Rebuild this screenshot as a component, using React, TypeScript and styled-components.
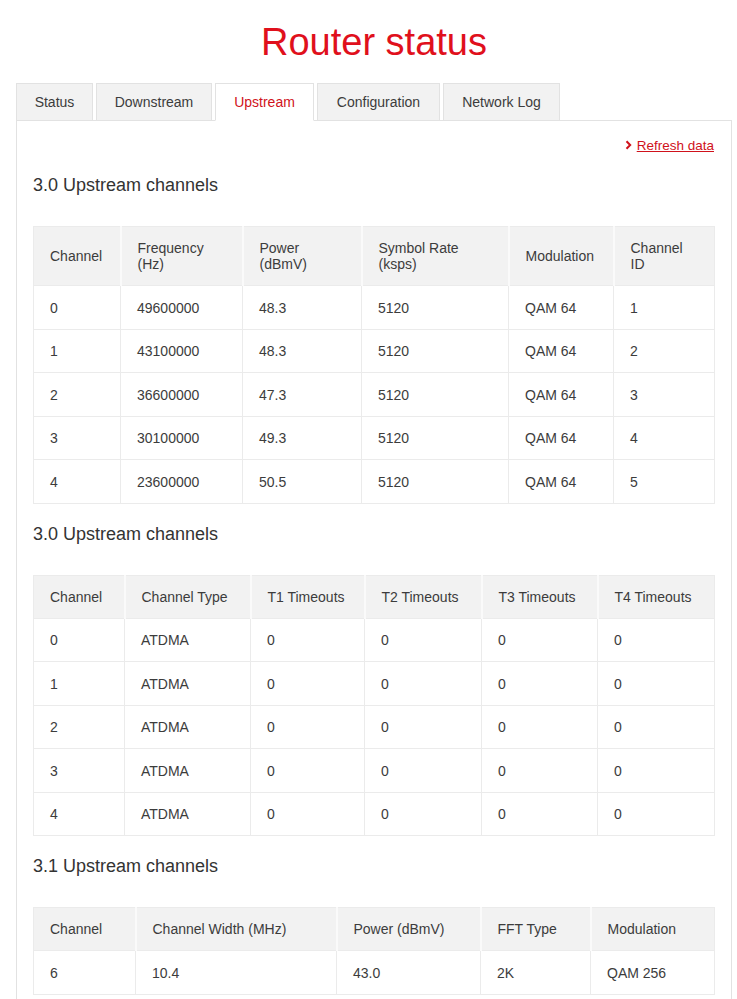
import React from "react";
import styled, { createGlobalStyle } from "styled-components";

const Global = createGlobalStyle`
  body {
    margin: 0;
    background: #fff;
    font-family: "Liberation Sans", Arial, sans-serif;
    color: #3c3c3c;
  }
`;

const Page = styled.div`
  padding: 0 5px 0 16px;
`;

const Title = styled.h1`
  margin: 0;
  padding-top: 19px;
  height: 83px;
  box-sizing: border-box;
  text-align: center;
  font-size: 38px;
  line-height: 46px;
  font-weight: 400;
  color: #e0101c;
`;

const Tabs = styled.div`
  display: flex;
  gap: 3px;
  height: 38px;
`;

const Tab = styled.div<{ $active?: boolean; $w: number }>`
  display: flex;
  align-items: center;
  justify-content: center;
  width: ${(p) => p.$w}px;
  box-sizing: border-box;
  font-size: 14px;
  border: 1px solid #e2e2e2;
  border-bottom: ${(p) => (p.$active ? "1px solid #fff" : "1px solid #e2e2e2")};
  background: ${(p) => (p.$active ? "#fff" : "#f2f2f2")};
  color: ${(p) => (p.$active ? "#d0121b" : "#3c3c3c")};
  position: relative;
  z-index: 1;
`;

const Panel = styled.div`
  border: 1px solid #e2e2e2;
  margin-top: -1px;
  padding: 14px 17px 20px 16px;
`;

const RefreshRow = styled.div`
  display: flex;
  justify-content: flex-end;
  align-items: center;
  gap: 5px;
  height: 20px;
  font-size: 13.5px;
`;

const RefreshLink = styled.a`
  color: #d0121b;
  text-decoration: underline;
  cursor: pointer;
`;

const Heading = styled.h2`
  margin: 19px 0 0;
  font-size: 18px;
  font-weight: 400;
  line-height: 22px;
  color: #333;
`;

const Table = styled.table`
  width: 100%;
  margin-top: 30px;
  border-collapse: collapse;
  table-layout: fixed;
  font-size: 14px;
  border: 1px solid #ebebeb;
`;

const Th = styled.th`
  background: #f2f2f2;
  text-align: left;
  font-weight: 400;
  line-height: 16px;
  padding: 13px 8px 13px 16px;
  border-right: 2px solid #fafafa;
  vertical-align: middle;
  &:last-child {
    border-right: none;
  }
`;

const Td = styled.td`
  line-height: 16px;
  padding: 13.5px 8px 13px 16px;
  border: 1px solid #ebebeb;
`;

const Chevron = () => (
  <svg width="7" height="10" viewBox="0 0 7 10">
    <path d="M1.5 1.2 L5.2 5 L1.5 8.8" fill="none" stroke="#d0121b" strokeWidth="2" />
  </svg>
);

type Spec = { widths: number[]; head: React.ReactNode[]; rows: string[][] };

const DataTable = ({ widths, head, rows }: Spec) => (
  <Table>
    <colgroup>
      {widths.map((w, i) => (
        <col key={i} style={{ width: w }} />
      ))}
    </colgroup>
    <thead>
      <tr>
        {head.map((h, i) => (
          <Th key={i}>{h}</Th>
        ))}
      </tr>
    </thead>
    <tbody>
      {rows.map((r, i) => (
        <tr key={i}>
          {r.map((c, j) => (
            <Td key={j}>{c}</Td>
          ))}
        </tr>
      ))}
    </tbody>
  </Table>
);

const two = (a: string, b: string) => (
  <>
    {a}
    <br />
    {b}
  </>
);

const table1: Spec = {
  widths: [87, 122, 119, 147, 105, 101],
  head: ["Channel", two("Frequency", "(Hz)"), two("Power", "(dBmV)"), two("Symbol Rate", "(ksps)"), "Modulation", two("Channel", "ID")],
  rows: [
    ["0", "49600000", "48.3", "5120", "QAM 64", "1"],
    ["1", "43100000", "48.3", "5120", "QAM 64", "2"],
    ["2", "36600000", "47.3", "5120", "QAM 64", "3"],
    ["3", "30100000", "49.3", "5120", "QAM 64", "4"],
    ["4", "23600000", "50.5", "5120", "QAM 64", "5"],
  ],
};

const table2: Spec = {
  widths: [91, 126, 114, 117, 116, 117],
  head: ["Channel", "Channel Type", "T1 Timeouts", "T2 Timeouts", "T3 Timeouts", "T4 Timeouts"],
  rows: [0, 1, 2, 3, 4].map((n) => [String(n), "ATDMA", "0", "0", "0", "0"]),
};

const table3: Spec = {
  widths: [102, 201, 144, 110, 124],
  head: ["Channel", "Channel Width (MHz)", "Power (dBmV)", "FFT Type", "Modulation"],
  rows: [["6", "10.4", "43.0", "2K", "QAM 256"]],
};

const tabs = [
  { label: "Status", w: 77 },
  { label: "Downstream", w: 116 },
  { label: "Upstream", w: 99, active: true },
  { label: "Configuration", w: 123 },
  { label: "Network Log", w: 117 },
];

export default function App() {
  return (
    <Page>
      <Global />
      <Title>Router status</Title>
      <Tabs>
        {tabs.map((t) => (
          <Tab key={t.label} $w={t.w} $active={t.active}>
            {t.label}
          </Tab>
        ))}
      </Tabs>
      <Panel>
        <RefreshRow>
          <Chevron />
          <RefreshLink>Refresh data</RefreshLink>
        </RefreshRow>
        <Heading>3.0 Upstream channels</Heading>
        <DataTable {...table1} />
        <Heading>3.0 Upstream channels</Heading>
        <DataTable {...table2} />
        <Heading>3.1 Upstream channels</Heading>
        <DataTable {...table3} />
      </Panel>
    </Page>
  );
}
